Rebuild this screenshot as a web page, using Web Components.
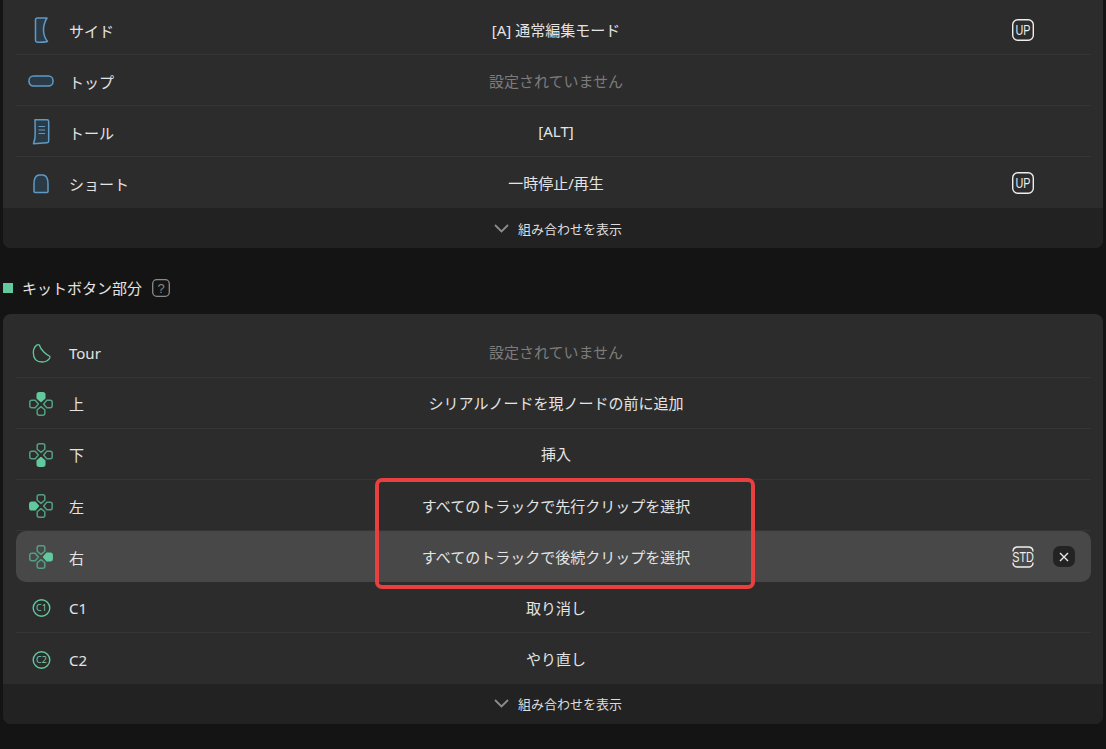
<!DOCTYPE html>
<html lang="ja">
<head>
<meta charset="utf-8">
<title>キー設定</title>
<style>
    html, body {
        margin: 0;
        background: #141414;
    }
    body {
        height: 749px;
        overflow: hidden;
        font-family: "Noto Sans", "Noto Sans CJK JP", sans-serif;
        color: #e4e4e4;
    }
    .first {
        margin-top: -9px;
    }
    .second {
        --rows-top: 12.5px;
        --row-h: 51.17px;
        --last-h: 50.5px;
    }
</style>
</head>
<body>
<cfg-card class="first" footer="組み合わせを表示">
    <cfg-row icon="side" label="サイド" badge="UP">[A] 通常編集モード</cfg-row>
    <cfg-row icon="top" label="トップ" muted>設定されていません</cfg-row>
    <cfg-row icon="tall" label="トール">[ALT]</cfg-row>
    <cfg-row icon="short" label="ショート" badge="UP" last>一時停止/再生</cfg-row>
</cfg-card>

<cfg-title>キットボタン部分</cfg-title>

<cfg-card class="second" footer="組み合わせを表示">
    <cfg-row icon="tour" label="Tour" muted>設定されていません</cfg-row>
    <cfg-row icon="pad-up" label="上">シリアルノードを現ノードの前に追加</cfg-row>
    <cfg-row icon="pad-down" label="下">挿入</cfg-row>
    <cfg-row icon="pad-left" label="左">すべてのトラックで先行クリップを選択</cfg-row>
    <cfg-row icon="pad-right" label="右" badge="STD" selected>すべてのトラックで後続クリップを選択</cfg-row>
    <cfg-row icon="c1" label="C1">取り消し</cfg-row>
    <cfg-row icon="c2" label="C2" last>やり直し</cfg-row>
    <red-mark slot="overlay"></red-mark>
</cfg-card>

<script>
const BLUE = '#5f9ac4';
const BLUE_FILL = '#2b3a47';
const GREEN = '#62c99e';

// Petal of the d-pad, pointing at the centre (drawn for "up", rotated for the others)
function petal(angle, active) {
    const fill = active ? GREEN : 'none';
    const stroke = active ? GREEN : '#549f84';
    return `<path transform="rotate(${angle} 12 12)" d="M8.2 2.800q0-2 2-2h3.600q2 0 2 2v3.400l-3.800 3.200-3.800-3.200z" fill="${fill}" stroke="${stroke}" stroke-width="1.500" stroke-linejoin="round"/>`;
}

function padIcon(active) {
    const angles = { up: 0, right: 90, down: 180, left: 270 };
    const petals = Object.keys(angles).map(k => petal(angles[k], k === active)).join('');
    return `<svg width="24" height="24" viewBox="0 0 24 24">${petals}</svg>`;
}

function circleIcon(text) {
    return `<svg width="24" height="24" viewBox="0 0 24 24">
        <circle cx="12.500" cy="12" r="8.300" fill="none" stroke="${GREEN}" stroke-width="1.400"/>
        <text x="12.500" y="15.200" text-anchor="middle" font-size="9" fill="#7fc7a9" font-family="Noto Sans">${text}</text>
    </svg>`;
}

const ICONS = {
    side: `<svg width="24" height="28" viewBox="0 0 24 28"><path d="M6.500 4q0-2 2-2h9.500q-3.500 5.500-3.500 12t4 11.500q-4.500 1-9.500.8-2.500-.1-2.500-2.300z" fill="${BLUE_FILL}" stroke="${BLUE}" stroke-width="1.500" stroke-linejoin="round"/></svg>`,
    top: `<svg width="26" height="14" viewBox="0 0 26 14"><rect x="1" y="2" width="24" height="10" rx="4.500" fill="${BLUE_FILL}" stroke="${BLUE}" stroke-width="1.500"/></svg>`,
    tall: `<svg width="24" height="28" viewBox="0 0 24 28"><path d="M6 1.800h12q1.700 0 1.700 1.700v19.500q0 1.700-1.700 1.800-7 .6-13.500 1 2-5 1.700-11.500z" fill="${BLUE_FILL}" stroke="${BLUE}" stroke-width="1.500" stroke-linejoin="round"/><path d="M9.500 8.500h6.500M9.500 12h6.500M9.500 15.500h6.500" stroke="${BLUE}" stroke-width="1.200"/></svg>`,
    short: `<svg width="24" height="22" viewBox="0 0 24 22"><path d="M5 18.500v-7.500q0-8.500 5-9h4q5 .5 5 9v7.500q0 1-1 1h-12q-1 0-1-1z" fill="${BLUE_FILL}" stroke="${BLUE}" stroke-width="1.500"/></svg>`,
    tour: `<svg width="24" height="24" viewBox="0 0 24 24"><path d="M7.500 4.200q1.500-1.200 2.800-.2 1 3.500 4.500 7 2.500 2.500 5.500 4 1.200.8.500 2-2.500 4-7.500 4-9 0-9-9.500 0-4.500 3.200-7.300z" fill="none" stroke="${GREEN}" stroke-width="1.300" stroke-linejoin="round"/></svg>`,
    'pad-up': padIcon('up'),
    'pad-down': padIcon('down'),
    'pad-left': padIcon('left'),
    'pad-right': padIcon('right'),
    c1: circleIcon('C1'),
    c2: circleIcon('C2')
};

const BADGES = {
    UP: `<svg width="24" height="24" viewBox="0 0 24 24"><rect x="1.700" y="1.700" width="20.600" height="20.600" rx="5" fill="none" stroke="#eee" stroke-width="1.400"/><text transform="translate(12 17.200) scale(.72 1)" text-anchor="middle" font-size="15" fill="#eee" font-family="Liberation Sans">UP</text></svg>`,
    STD: `<svg width="24" height="24" viewBox="0 0 24 24"><path d="M2 6.500q0-4 4-4.500h12q4 .5 4 4.500M2 17.500q0 4 4 4.500h12q4-.5 4-4.500" fill="none" stroke="#eee" stroke-width="1.400"/><text transform="translate(12 17.200) scale(.72 1)" text-anchor="middle" font-size="15" fill="#eee" font-family="Liberation Sans">STD</text></svg>`
};

const cardTemplate = document.createElement('template');
cardTemplate.innerHTML = `
    <style>
        :host {
            display: block;
            position: relative;
            margin: 0 3px;
            background-color: #2c2c2c;
            border-radius: 8px;
        }

        .rows {
            display: block;
            padding: var(--rows-top, 13px) 12px 0 13px;
        }

        .footer {
            display: flex;
            align-items: center;
            justify-content: center;
            gap: 9px;
            height: 40px;
            padding-left: 10px;
            box-sizing: border-box;
            background-color: #222222;
            border-radius: 0 0 8px 8px;
            font-size: 13px;
            color: #dcdcdc;
        }
    </style>

    <div class="rows"><slot></slot></div>
    <div class="footer">
        <svg width="15" height="9" viewBox="0 0 15 9"><path d="M1 1l6.500 6.500 6.500-6.500" fill="none" stroke="#8c8c8c" stroke-width="1.800"/></svg>
        <span class="label"></span>
    </div>
    <slot name="overlay"></slot>
`;

class CfgCard extends HTMLElement {
    constructor() {
        super();
        this._shadowRoot = this.attachShadow({ mode: 'open' });
        this._shadowRoot.appendChild(cardTemplate.content.cloneNode(true));
        this.$label = this._shadowRoot.querySelector('.label');
    }

    connectedCallback() {
        this.$label.textContent = this.getAttribute('footer');
    }
}

const rowTemplate = document.createElement('template');
rowTemplate.innerHTML = `
    <style>
        :host {
            display: grid;
            grid-template-columns: 279px 1fr 274px;
            align-items: center;
            height: var(--row-h, 51px);
            box-sizing: border-box;
            border-bottom: 1px solid #353535;
            font-size: 15px;
            color: #e4e4e4;
        }

        :host([last]) {
            border-bottom: 0;
            height: var(--last-h, 51px);
        }

        :host([selected]) {
            background-color: #484848;
            border-radius: 10px;
            border-bottom-color: transparent;
        }

        :host([muted]) .action {
            color: #7c7c7c;
        }

        .left {
            display: flex;
            align-items: center;
            min-width: 0;
        }

        .icon {
            display: flex;
            align-items: center;
            justify-content: center;
            width: 26px;
            height: 28px;
            margin-top: 2px;
            margin-left: 12px;
            margin-right: 15px;
        }

        .label {
            padding-top: 2px;
        }

        .action {
            text-align: center;
        }

        .right {
            display: flex;
            align-items: center;
            gap: 18px;
            padding-left: 194px;
        }

        .badge {
            display: flex;
            width: 24px;
            height: 24px;
            margin-top: 1px;
        }

        .close {
            display: none;
            align-items: center;
            justify-content: center;
            width: 22px;
            height: 21px;
            margin-top: 1px;
            border-radius: 7px;
            background-color: #232323;
        }

        :host([selected]) .close {
            display: flex;
        }
    </style>

    <div class="left">
        <span class="icon"></span>
        <span class="label"></span>
    </div>
    <div class="action"><slot></slot></div>
    <div class="right">
        <span class="badge"></span>
        <span class="close">
            <svg width="10" height="10" viewBox="0 0 10 10"><path d="M1 1l8 8M9 1l-8 8" stroke="#e8e8e8" stroke-width="1.400"/></svg>
        </span>
    </div>
`;

class CfgRow extends HTMLElement {
    constructor() {
        super();
        this._shadowRoot = this.attachShadow({ mode: 'open' });
        this._shadowRoot.appendChild(rowTemplate.content.cloneNode(true));
        this.$icon = this._shadowRoot.querySelector('.icon');
        this.$label = this._shadowRoot.querySelector('.label');
        this.$badge = this._shadowRoot.querySelector('.badge');
    }

    static get observedAttributes() {
        return ['icon', 'label', 'badge'];
    }

    attributeChangedCallback() {
        this.render();
    }

    render() {
        this.$icon.innerHTML = ICONS[this.getAttribute('icon')] || '';
        this.$label.textContent = this.getAttribute('label') || '';
        this.$badge.innerHTML = BADGES[this.getAttribute('badge')] || '';
    }
}

const titleTemplate = document.createElement('template');
titleTemplate.innerHTML = `
    <style>
        :host {
            display: flex;
            align-items: center;
            height: 20px;
            margin: 30px 0 16px 3px;
            font-size: 15px;
            color: #e4e4e4;
        }

        .mark {
            width: 10px;
            height: 10px;
            margin-right: 9px;
            background-color: ${GREEN};
        }

        .text {
            margin-bottom: 2px;
        }

        svg {
            margin-left: 10px;
        }
    </style>

    <span class="mark"></span>
    <span class="text"><slot></slot></span>
    <svg width="18" height="18" viewBox="0 0 18 18">
        <rect x=".7" y=".7" width="16.600" height="16.600" rx="4" fill="none" stroke="#8a8a8a" stroke-width="1.300"/>
        <text x="9" y="13.800" text-anchor="middle" font-size="13" fill="#8a8a8a" font-family="Liberation Sans">?</text>
    </svg>
`;

class CfgTitle extends HTMLElement {
    constructor() {
        super();
        this.attachShadow({ mode: 'open' }).appendChild(titleTemplate.content.cloneNode(true));
    }
}

const markTemplate = document.createElement('template');
markTemplate.innerHTML = `
    <style>
        :host {
            position: absolute;
            top: 164px;
            left: 372px;
            width: 380px;
            height: 111px;
            box-sizing: border-box;
            border: 4px solid #e8403f;
            border-radius: 7px;
            pointer-events: none;
        }
    </style>
`;

// Red annotation frame lying over the rows
class RedMark extends HTMLElement {
    constructor() {
        super();
        this.attachShadow({ mode: 'open' }).appendChild(markTemplate.content.cloneNode(true));
    }
}

window.customElements.define('cfg-card', CfgCard);
window.customElements.define('cfg-row', CfgRow);
window.customElements.define('cfg-title', CfgTitle);
window.customElements.define('red-mark', RedMark);
</script>
</body>
</html>
